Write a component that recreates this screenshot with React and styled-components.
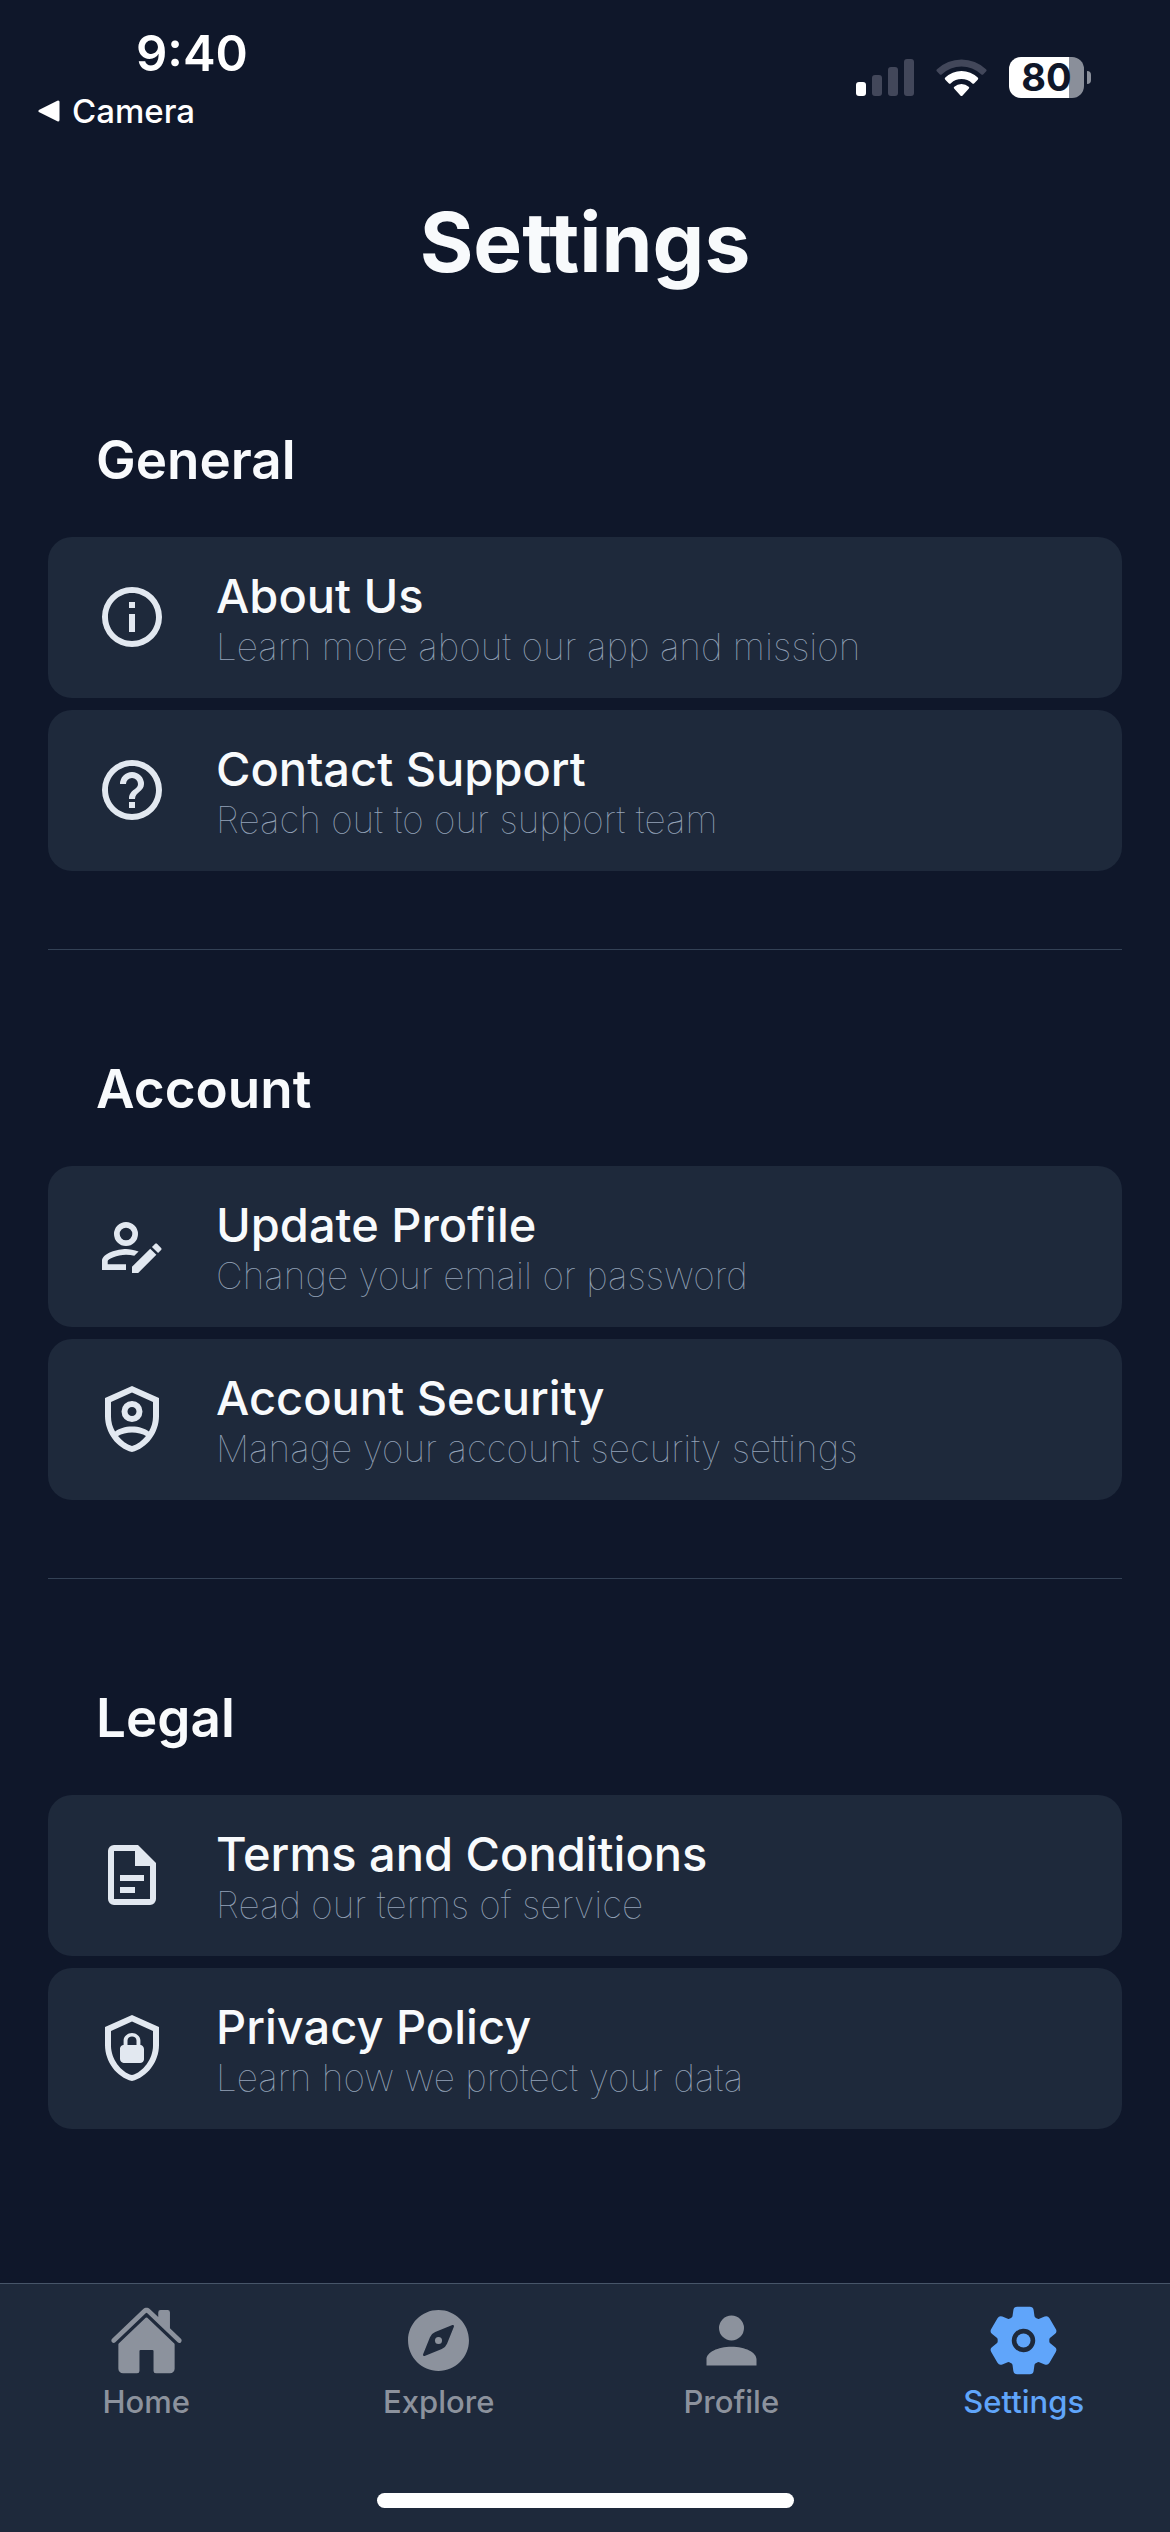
import React from "react";
import styled, { createGlobalStyle } from "styled-components";
import { IoHome, IoCompass, IoSettings } from "react-icons/io5";

const color = {
  page: "#0f172a",
  surface: "#1e293b",
  text: "#f8fafc",
  icon: "#e2e8f0",
  muted: "#94a3b8",
  divider: "#334155",
  tabBorder: "#475569",
  tab: "#8c929d",
  accent: "#60a5fa",
};

const GlobalStyle = createGlobalStyle`
  *, *::before, *::after { box-sizing: border-box; }
  body {
    margin: 0;
    background: ${color.page};
    color: ${color.text};
    font-family: Inter, Roboto, "Liberation Sans", sans-serif;
  }
`;

const Screen = styled.div`
  display: flex;
  flex-direction: column;
  min-height: 100vh;
`;

const StatusBar = styled.header`
  display: flex;
  justify-content: space-between;
  min-height: 141px;
  padding: 24px 79px 0 38px;
  color: #fff;
`;

const StatusLeft = styled.div`
  display: flex;
  flex-direction: column;
  align-items: flex-start;
  gap: 7px;
`;

const Clock = styled.time`
  padding-left: 98px;
  font-size: 49px;
  line-height: 60px;
  font-weight: 600;
`;

const PlainButton = styled.button`
  display: flex;
  align-items: center;
  margin: 0;
  padding: 0;
  border: 0;
  background: none;
  color: inherit;
  font: inherit;
  cursor: pointer;
`;

const BackButton = styled(PlainButton)`
  gap: 11px;
  font-size: 33px;
  line-height: 40px;
  font-weight: 500;
`;

const StatusRight = styled.div`
  display: flex;
  align-items: center;
  gap: 22px;
  height: 107px;
`;

const Battery = styled.div`
  display: flex;
  align-items: center;
  gap: 3px;
`;

const BatteryBody = styled.div`
  width: 75px;
  border-radius: 12px;
  background: linear-gradient(to right, #fff ${(p) => p.$level}%, #8a8f9a ${(p) => p.$level}%);
  color: ${color.page};
  font-size: 38px;
  line-height: 41px;
  font-weight: 700;
  text-align: center;
`;

const BatteryNub = styled.div`
  width: 4px;
  height: 13px;
  border-radius: 0 6px 6px 0;
  background: #8a8f9a;
`;

const Main = styled.main`
  flex: 1;
  padding: 52px 48px 80px;
`;

const PageTitle = styled.h1`
  margin: 0 0 131px;
  font-size: 82px;
  line-height: 100px;
  font-weight: 700;
  text-align: center;
`;

const Section = styled.section`
  & + & {
    margin-top: 78px;
    padding-top: 103px;
    border-top: 1px solid ${color.divider};
  }
`;

const SectionTitle = styled.h2`
  margin: 0 0 41px;
  padding: 0 48px;
  font-size: 53px;
  line-height: 72px;
  font-weight: 600;
`;

const RowList = styled.div`
  display: flex;
  flex-direction: column;
  gap: 12px;
`;

const Row = styled(PlainButton)`
  gap: 48px;
  width: 100%;
  padding: 29px 48px 30px;
  border-radius: 24px;
  background: ${color.surface};
  text-align: left;
`;

const RowIcon = styled.svg`
  flex: none;
  width: 72px;
  height: 72px;
  fill: ${color.icon};
  fill-rule: evenodd;
`;

const RowText = styled.span`
  display: flex;
  flex-direction: column;
`;

const RowTitle = styled.span`
  font-size: 47px;
  line-height: 60px;
  font-weight: 500;
`;

const RowDescription = styled.span`
  color: ${color.muted};
  font-size: 37px;
  line-height: 42px;
  font-weight: 100;
`;

const BottomBar = styled.footer`
  border-top: 1px solid ${color.tabBorder};
  padding: 19px 0 24px;
  background: ${color.surface};
`;

const Tabs = styled.nav`
  display: grid;
  grid-template-columns: repeat(4, 1fr);
`;

const Tab = styled.a`
  display: flex;
  flex-direction: column;
  align-items: center;
  gap: 6px;
  color: ${(p) => (p.$active ? color.accent : color.tab)};
  font-size: 31px;
  line-height: 36px;
  font-weight: 500;
  text-decoration: none;

  svg {
    width: 75px;
    height: 75px;
    fill: currentColor;
  }
`;

const HomeIndicator = styled.div`
  width: 417px;
  max-width: 60%;
  height: 15px;
  margin: 73px auto 0;
  border-radius: 8px;
  background: #fff;
`;

const paths = {
  info: "M11,9H13V7H11M12,20C7.59,20 4,16.41 4,12C4,7.59 7.59,4 12,4C16.41,4 20,7.59 20,12C20,16.41 16.41,20 12,20M12,2A10,10 0 0,0 2,12A10,10 0 0,0 12,22A10,10 0 0,0 22,12A10,10 0 0,0 12,2M11,17H13V11H11V17Z",
  help: "M11,18H13V16H11V18M12,2A10,10 0 0,0 2,12A10,10 0 0,0 12,22A10,10 0 0,0 22,12A10,10 0 0,0 12,2M12,20C7.59,20 4,16.41 4,12C4,7.59 7.59,4 12,4C16.41,4 20,7.59 20,12C20,16.41 16.41,20 12,20M12,6A4,4 0 0,0 8,10H10A2,2 0 0,1 12,8A2,2 0 0,1 14,10C14,12 11,11.75 11,15H13C13,12.75 16,12.5 16,10A4,4 0 0,0 12,6Z",
  edit: "M21.7,13.35L20.7,14.35L18.65,12.35L19.65,11.35C19.86,11.14 20.21,11.14 20.42,11.35L21.7,12.63C21.91,12.84 21.91,13.14 21.7,13.35M12,18.94V21H14.06L20.12,14.88L18.07,12.88L12,18.94M10,13C7.33,13 2,14.33 2,17V20H10V18.1H3.9V17C3.9,16.36 7.03,14.9 10,14.9C10.97,14.9 11.91,15.04 12.77,15.28L14.2,13.85C12.76,13.32 11.1,13 10,13M10,4A4,4 0 0,0 6,8A4,4 0 0,0 10,12A4,4 0 0,0 14,8A4,4 0 0,0 10,4M10,5.9A2.1,2.1 0 0,1 12.1,8A2.1,2.1 0 0,1 10,10.1A2.1,2.1 0 0,1 7.9,8A2.1,2.1 0 0,1 10,5.9Z",
  shieldUser:
    "M21,11C21,16.55 17.16,21.74 12,23C6.84,21.74 3,16.55 3,11V5L12,1L21,5V11M12,3.18L5,6.3V11.22C5,12.92 5.5,14.65 6.35,16.18C7.55,15.2 9.7,14.5 12,14.5C14.3,14.5 16.45,15.2 17.65,16.18C18.5,14.65 19,12.92 19,11.22V6.3L12,3.18M12,21C13.77,20.53 15.4,19.29 16.66,17.7C15.56,16.93 13.7,16.5 12,16.5C10.3,16.5 8.5,16.93 7.34,17.7C8.6,19.29 10.23,20.53 12,21M12,6A3.5,3.5 0 0,0 8.5,9.5A3.5,3.5 0 0,0 12,13A3.5,3.5 0 0,0 15.5,9.5A3.5,3.5 0 0,0 12,6M12,8A1.5,1.5 0 0,1 13.5,9.5A1.5,1.5 0 0,1 12,11A1.5,1.5 0 0,1 10.5,9.5A1.5,1.5 0 0,1 12,8Z",
  document:
    "M6,2A2,2 0 0,0 4,4V20A2,2 0 0,0 6,22H18A2,2 0 0,0 20,20V8L14,2H6M6,4H13V9H18V20H6V4M8,12V14H16V12H8M8,16V18H13V16H8Z",
  shieldLock:
    "M21,11C21,16.55 17.16,21.74 12,23C6.84,21.74 3,16.55 3,11V5L12,1L21,5V11M12,21C15.75,20 19,15.54 19,11.22V6.3L12,3.18L5,6.3V11.22C5,15.54 8.25,20 12,21M14.8,11V9.5C14.8,8.1 13.4,7 12,7C10.6,7 9.2,8.1 9.2,9.5V11C8.6,11 8,11.6 8,12.2V15.7C8,16.4 8.6,17 9.2,17H14.7C15.4,17 16,16.4 16,15.8V12.3C16,11.6 15.4,11 14.8,11M13.5,11H10.5V9.5C10.5,8.7 11.2,8.2 12,8.2C12.8,8.2 13.5,8.7 13.5,9.5V11Z",
};

const sections = [
  {
    title: "General",
    rows: [
      { icon: "info", title: "About Us", description: "Learn more about our app and mission" },
      { icon: "help", title: "Contact Support", description: "Reach out to our support team" },
    ],
  },
  {
    title: "Account",
    rows: [
      { icon: "edit", title: "Update Profile", description: "Change your email or password" },
      { icon: "shieldUser", title: "Account Security", description: "Manage your account security settings" },
    ],
  },
  {
    title: "Legal",
    rows: [
      { icon: "document", title: "Terms and Conditions", description: "Read our terms of service" },
      { icon: "shieldLock", title: "Privacy Policy", description: "Learn how we protect your data" },
    ],
  },
];

const PersonIcon = () => (
  <svg viewBox="0 0 24 24" aria-hidden="true">
    <path d="M12,4A4,4 0 0,1 16,8A4,4 0 0,1 12,12A4,4 0 0,1 8,8A4,4 0 0,1 12,4M12,14C16.42,14 20,15.79 20,18V20H4V18C4,15.79 7.58,14 12,14Z" />
  </svg>
);

const tabs = [
  { label: "Home", Icon: IoHome },
  { label: "Explore", Icon: IoCompass },
  { label: "Profile", Icon: PersonIcon },
  { label: "Settings", Icon: IoSettings, active: true },
];

const SignalIcon = () => (
  <svg width="58" height="37" viewBox="0 0 58 37" aria-hidden="true">
    <rect x="0" y="23" width="10" height="14" rx="3" fill="#fff" />
    <rect x="16" y="16" width="10" height="21" rx="3" fill="#42475a" />
    <rect x="32" y="8" width="10" height="29" rx="3" fill="#42475a" />
    <rect x="48" y="0" width="10" height="37" rx="3" fill="#42475a" />
  </svg>
);

const WifiIcon = () => (
  <svg width="51" height="38" viewBox="0 0 51 38" aria-hidden="true">
    <path
      d="M1 10.2a1.7 1.7 0 0 0 0 2.4l2.6 2.6a1.7 1.7 0 0 0 2.3 0a28.5 28.5 0 0 1 39.2 0a1.7 1.7 0 0 0 2.3 0l2.6-2.6a1.7 1.7 0 0 0 0-2.4a35.6 35.6 0 0 0-49 0z"
      fill="#42475a"
    />
    <path
      d="M9.3 18.6a1.5 1.5 0 0 0 0 2.2l3.4 3.5a1.6 1.6 0 0 0 2.2 0a15.5 15.5 0 0 1 21.2 0a1.6 1.6 0 0 0 2.2 0l3.4-3.5a1.5 1.5 0 0 0 0-2.2a23.4 23.4 0 0 0-32.4 0z"
      fill="#fff"
    />
    <path
      d="M18.3 27.8a1.3 1.3 0 0 0 0 2l6.1 6.6a1.5 1.5 0 0 0 2.2 0l6.1-6.6a1.3 1.3 0 0 0 0-2a11 11 0 0 0-14.4 0z"
      fill="#fff"
    />
  </svg>
);

const BackArrow = () => (
  <svg width="23" height="22" viewBox="0 0 23 22" aria-hidden="true">
    <path d="M2 11L20 2V20Z" fill="#fff" stroke="#fff" strokeWidth="3" strokeLinejoin="round" />
  </svg>
);

export default function App() {
  return (
    <Screen>
      <GlobalStyle />
      <StatusBar>
        <StatusLeft>
          <Clock>9:40</Clock>
          <BackButton type="button">
            <BackArrow />
            Camera
          </BackButton>
        </StatusLeft>
        <StatusRight>
          <SignalIcon />
          <WifiIcon />
          <Battery>
            <BatteryBody $level={80}>80</BatteryBody>
            <BatteryNub />
          </Battery>
        </StatusRight>
      </StatusBar>

      <Main>
        <PageTitle>Settings</PageTitle>
        {sections.map((section) => (
          <Section key={section.title}>
            <SectionTitle>{section.title}</SectionTitle>
            <RowList>
              {section.rows.map((row) => (
                <Row key={row.title} type="button">
                  <RowIcon viewBox="0 0 24 24" aria-hidden="true">
                    <path d={paths[row.icon]} />
                  </RowIcon>
                  <RowText>
                    <RowTitle>{row.title}</RowTitle>
                    <RowDescription>{row.description}</RowDescription>
                  </RowText>
                </Row>
              ))}
            </RowList>
          </Section>
        ))}
      </Main>

      <BottomBar>
        <Tabs>
          {tabs.map(({ label, Icon, active }) => (
            <Tab key={label} href={`#${label.toLowerCase()}`} $active={active}>
              <Icon />
              {label}
            </Tab>
          ))}
        </Tabs>
        <HomeIndicator />
      </BottomBar>
    </Screen>
  );
}
